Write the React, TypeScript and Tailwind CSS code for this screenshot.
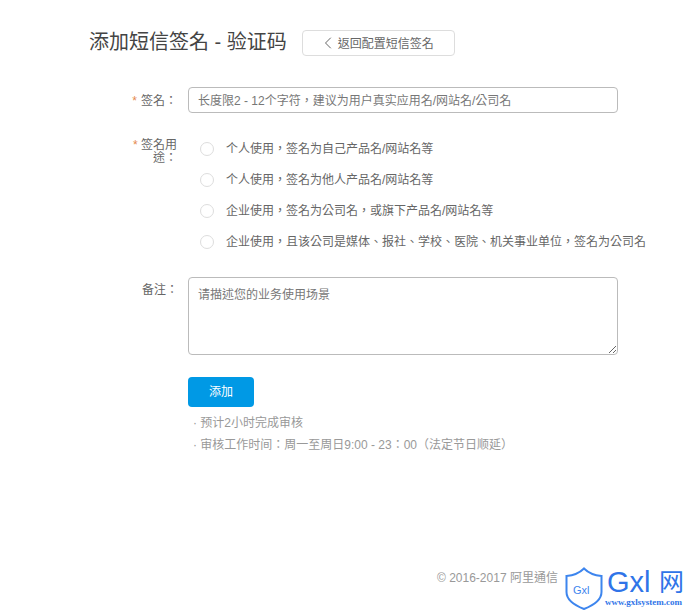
import React from 'react';
import { ChevronLeft } from 'lucide-react';

const font = { fontFamily: '"Liberation Sans", "Noto Sans CJK TC", sans-serif' };

const purposes = [
  '个人使用，签名为自己产品名/网站名等',
  '个人使用，签名为他人产品名/网站名等',
  '企业使用，签名为公司名，或旗下产品名/网站名等',
  '企业使用，且该公司是媒体、报社、学校、医院、机关事业单位，签名为公司名',
];

function Watermark() {
  return (
    <div className="absolute left-[564px] top-[566px] w-[134px] h-[45px]">
      <svg width="40" height="45" viewBox="0 0 40 45" className="absolute left-0 top-0">
        <path d="M20 2.5 C15.5 7 8 9.5 2.5 10 L2.5 26 C2.5 34 11 39.5 20 43 C29 39.5 37.5 34 37.5 26 L37.5 10 C32 9.5 24.5 7 20 2.5 Z" fill="#fff" stroke="#3d85ee" strokeWidth="2" />
      </svg>
      <span className="absolute left-[9px] top-[17px] text-[11px] leading-[14px] text-[#3d85ee]">Gxl</span>
      <span className="absolute left-[43px] top-[1px] text-[29px] leading-[30px] text-[#2f74e8]">Gxl</span>
      <span className="absolute left-[95px] top-[0px] text-[25px] leading-[32px] text-[#2f74e8]">网</span>
      <span className="absolute left-[41px] top-[31px] text-[9px] leading-[10px] text-[#2f74e8] font-bold font-['Liberation_Serif'] whitespace-nowrap">www.gxlsystem.com</span>
    </div>
  );
}

export default function App() {
  return (
    <div className="relative w-[698px] h-[611px] overflow-hidden bg-white text-[#666] text-xs" style={font}>
      <div className="flex items-center h-[26px] mt-[30px] ml-[89px]">
        <h1 className="text-[20px] leading-[26px] text-[#444] font-normal pb-[2px]">添加短信签名 - 验证码</h1>
        <button className="ml-[15px] w-[153px] h-[26px] flex items-center justify-center border border-[#ddd] rounded text-xs text-[#666]">
          <ChevronLeft size={20} strokeWidth={1.2} className="-ml-[5px] -mr-[2px]" />
          <span className="ml-[2px] pt-[1px]">返回配置短信签名</span>
        </button>
      </div>

      <form className="mt-[31px] flex flex-col">
        <div className="flex items-center h-[26px]">
          <label className="w-[177px] text-right pt-[1px]">
            <span className="text-[#e5894e] mr-1">*</span>签名：
          </label>
          <input
            className="ml-[11px] w-[430px] h-[26px] border border-[#bbb] rounded px-[9px] pt-[1px] text-xs placeholder:text-[#777]"
            placeholder="长度限2 - 12个字符，建议为用户真实应用名/网站名/公司名"
          />
        </div>

        <div className="flex mt-[26px]">
          <div className="w-[177px] pl-[131px]">
            <label className="block text-right leading-[13px]">
              <span className="text-[#e5894e]">* </span>签名用途：
            </label>
          </div>
          <div className="ml-[23px] flex flex-col gap-[12px] whitespace-nowrap">
            {purposes.map(text => (
              <div key={text} className="flex items-center h-[19px]">
                <span className="w-[14px] h-[14px] rounded-full border border-[#ddd] bg-white" />
                <span className="ml-3 leading-[19px] pt-[2px]">{text}</span>
              </div>
            ))}
          </div>
        </div>

        <div className="flex mt-[26px]">
          <label className="w-[178px] text-right pt-[6px] leading-[14px]">备注：</label>
          <textarea
            className="ml-[10px] w-[430px] h-[78px] border border-[#bbb] rounded px-[9px] py-[9px] text-xs leading-[16px] placeholder:text-[#777]"
            placeholder="请描述您的业务使用场景"
          />
        </div>

        <button type="button" className="ml-[188px] mt-[22px] w-[66px] h-[30px] rounded bg-[#0099e5] text-white text-xs">
          添加
        </button>

        <ul className="ml-[193px] mt-[5px] text-[#999] leading-[22px]">
          <li>· 预计2小时完成审核</li>
          <li>· 审核工作时间：周一至周日9:00 - 23：00（法定节日顺延）</li>
        </ul>
      </form>

      <footer className="absolute left-[437px] top-[571px] text-[#999] leading-[14px]">© 2016-2017 阿里通信</footer>
      <Watermark />
    </div>
  );
}
